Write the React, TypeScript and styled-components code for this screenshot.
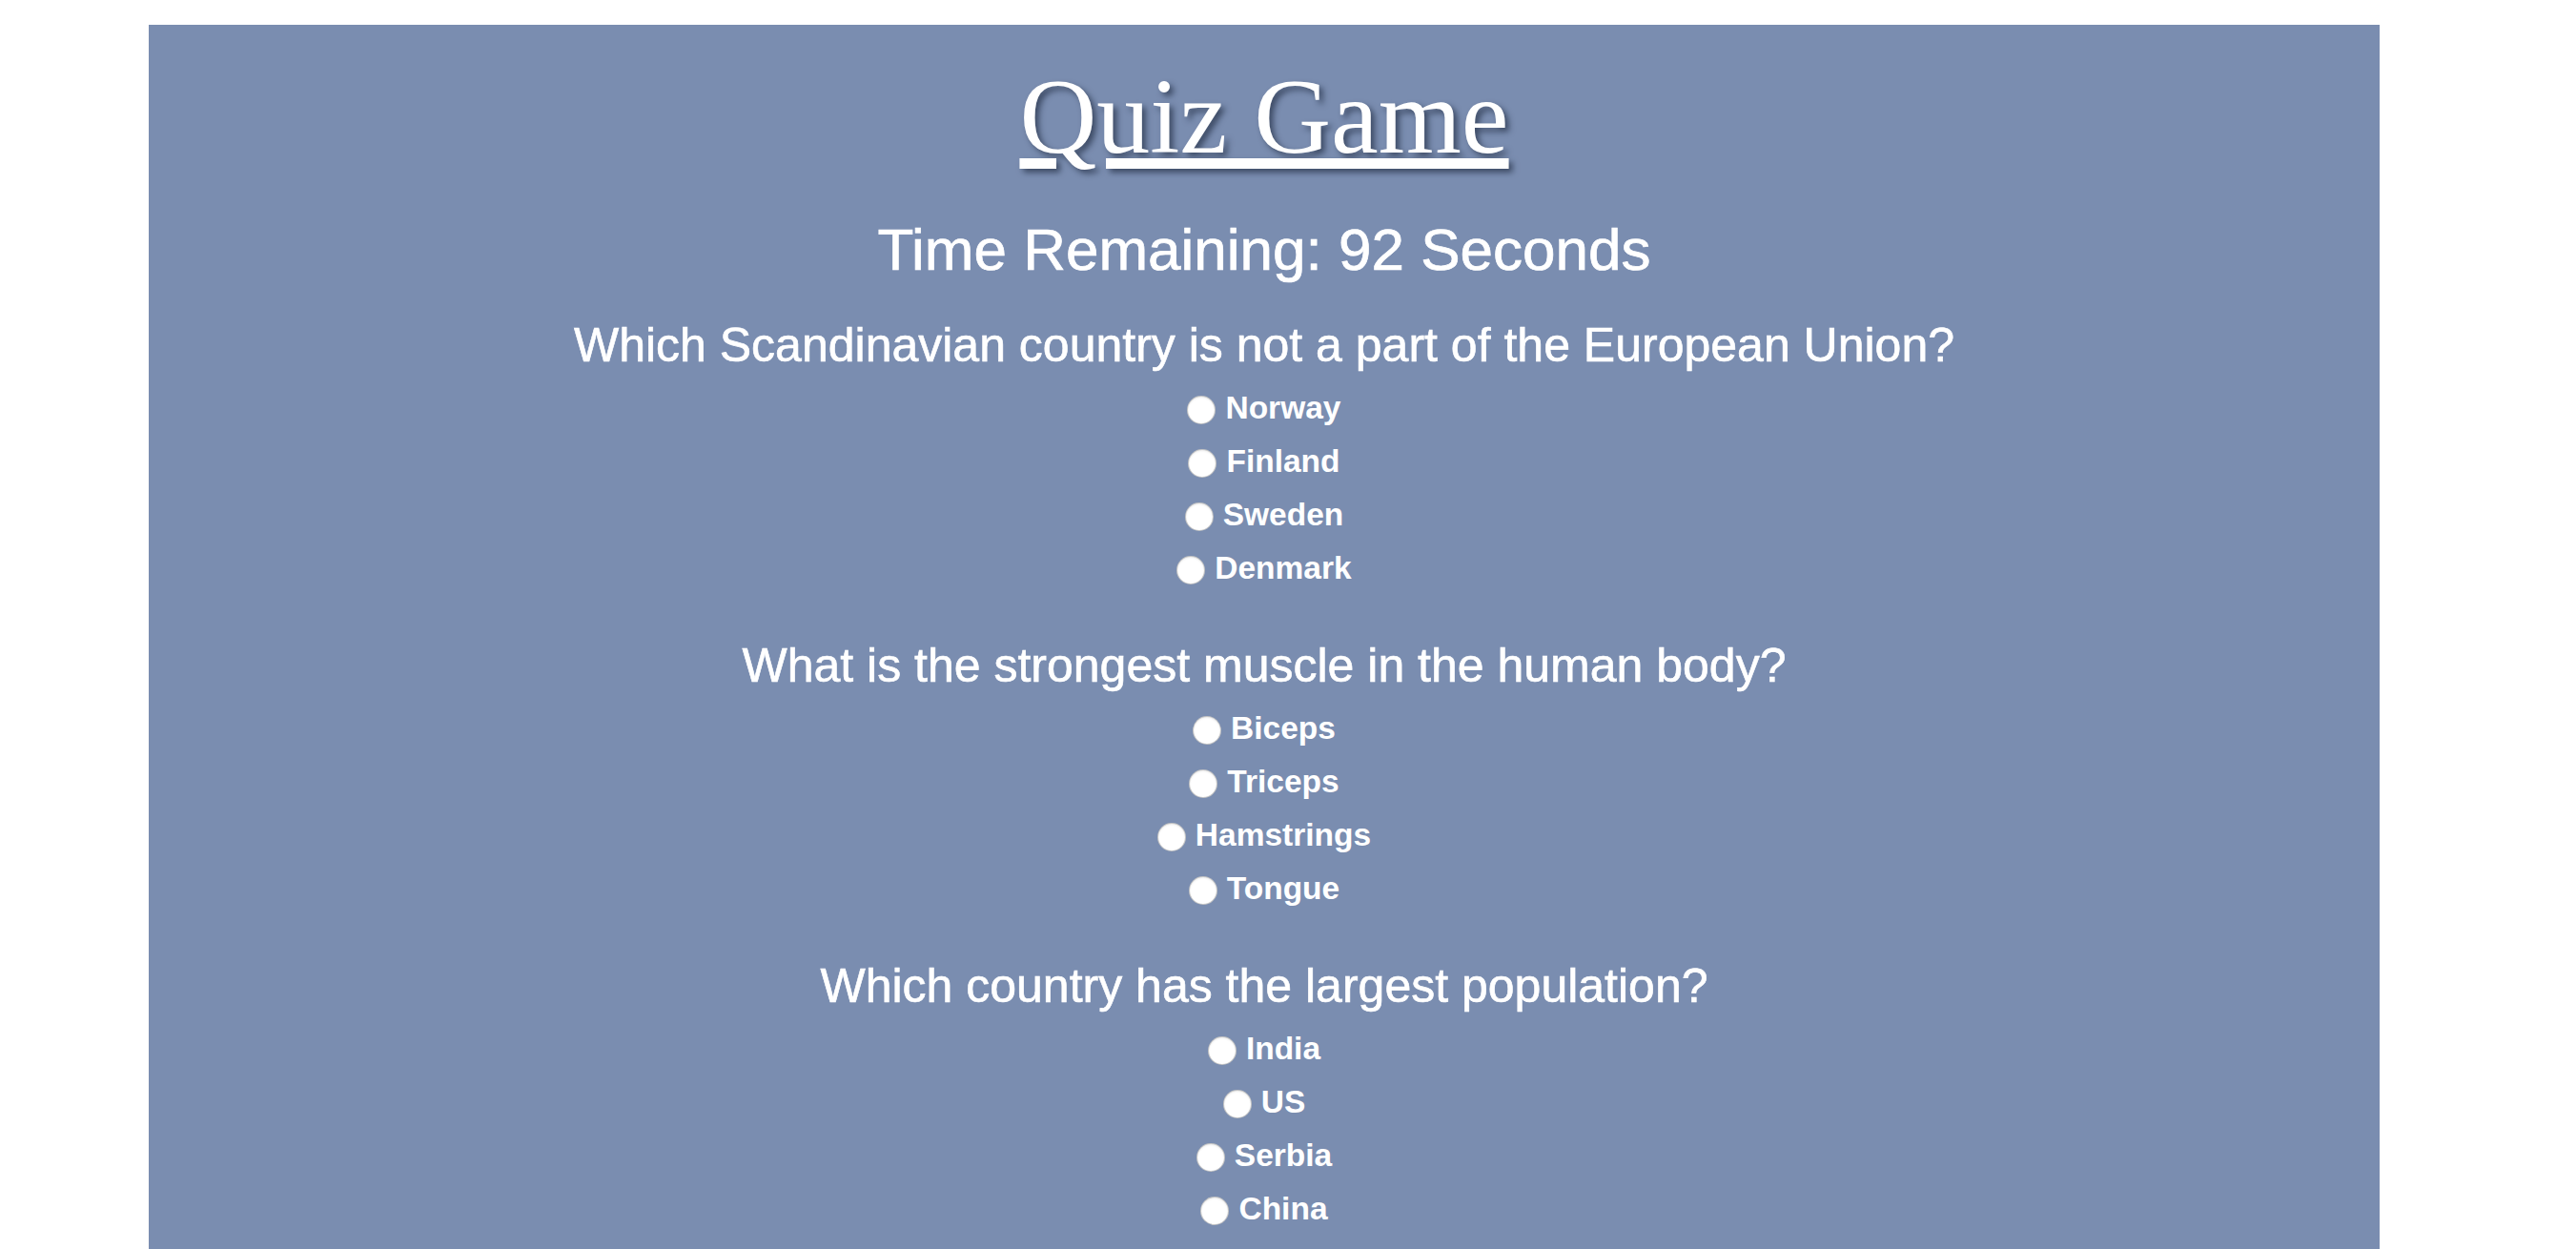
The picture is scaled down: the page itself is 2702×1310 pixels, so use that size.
import React from "react";
import styled, { createGlobalStyle } from "styled-components";

const GlobalStyle = createGlobalStyle`
  html, body {
    margin: 0;
    padding: 0;
    background: #ffffff;
  }
  body {
    font-family: "Liberation Sans", Arial, Helvetica, sans-serif;
  }
`;

const Page = styled.div`
  padding: 26px 0 0 156px;
`;

const Panel = styled.main`
  box-sizing: border-box;
  width: 2340px;
  background: #7a8db0;
  color: #ffffff;
  display: flex;
  flex-direction: column;
  align-items: center;
  padding: 32px 0 140px;
`;

const Title = styled.h1`
  margin: 0;
  font-family: "Liberation Serif", "Times New Roman", serif;
  font-weight: 400;
  font-size: 112px;
  line-height: 1.15;
  text-decoration: underline;
  text-shadow: 4px 4px 6px rgba(20, 30, 50, 0.6);
`;

const Timer = styled.h2`
  margin: 38px 0 0;
  font-size: 62px;
  line-height: 1.2;
  font-weight: 400;
  -webkit-text-stroke: 0.7px currentColor;
`;

const QuizList = styled.form`
  margin-top: 33px;
  display: flex;
  flex-direction: column;
  align-items: center;
  gap: 44px;
`;

const QuestionBlock = styled.section`
  display: flex;
  flex-direction: column;
  align-items: center;
`;

const QuestionText = styled.h3`
  margin: 0;
  font-size: 50px;
  line-height: 60px;
  font-weight: 400;
  -webkit-text-stroke: 0.6px currentColor;
`;

const Options = styled.div`
  padding-top: 8px;
  display: flex;
  flex-direction: column;
  align-items: center;
`;

const OptionRow = styled.label`
  height: 56px;
  display: flex;
  align-items: center;
  justify-content: center;
  gap: 10px;
  font-size: 33.5px;
  font-weight: 700;
  cursor: pointer;
`;

const Radio = styled.input.attrs({ type: "radio" })`
  appearance: none;
  -webkit-appearance: none;
  box-sizing: border-box;
  margin: 4px 0 0;
  width: 30px;
  height: 30px;
  border-radius: 50%;
  background: #ffffff;
  border: 1px solid rgba(90, 90, 90, 0.35);
  box-shadow: inset 0 1px 2px rgba(0, 0, 0, 0.08);
`;

const questions = [
  {
    id: "q1",
    text: "Which Scandinavian country is not a part of the European Union?",
    options: ["Norway", "Finland", "Sweden", "Denmark"],
  },
  {
    id: "q2",
    text: "What is the strongest muscle in the human body?",
    options: ["Biceps", "Triceps", "Hamstrings", "Tongue"],
  },
  {
    id: "q3",
    text: "Which country has the largest population?",
    options: ["India", "US", "Serbia", "China"],
  },
];

export default function App() {
  return (
    <Page>
      <GlobalStyle />
      <Panel>
        <Title>Quiz Game</Title>
        <Timer>Time Remaining: 92 Seconds</Timer>
        <QuizList onSubmit={(e) => e.preventDefault()}>
          {questions.map((q) => (
            <QuestionBlock key={q.id}>
              <QuestionText>{q.text}</QuestionText>
              <Options>
                {q.options.map((opt) => (
                  <OptionRow key={opt}>
                    <Radio name={q.id} value={opt} />
                    {opt}
                  </OptionRow>
                ))}
              </Options>
            </QuestionBlock>
          ))}
        </QuizList>
      </Panel>
    </Page>
  );
}
